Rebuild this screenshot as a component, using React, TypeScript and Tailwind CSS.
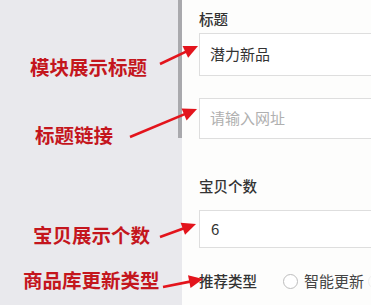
import React from "react";

const arrows: [number, number, number, number][] = [
  [160, 64, 198, 46],
  [130, 137, 197, 109],
  [160, 237, 196, 224],
  [163, 287, 203, 279],
];

function Arrow({ a }: { a: [number, number, number, number] }) {
  const [x1, y1, x2, y2] = a;
  const dx = x2 - x1;
  const dy = y2 - y1;
  const len = Math.hypot(dx, dy);
  const ux = dx / len;
  const uy = dy / len;
  const hl = 14;
  const hw = 6.5;
  const bx = x2 - ux * hl;
  const by = y2 - uy * hl;
  const p1 = `${x2},${y2}`;
  const p2 = `${bx - uy * hw},${by + ux * hw}`;
  const p3 = `${bx + uy * hw},${by - ux * hw}`;
  return (
    <g>
      <line x1={x1} y1={y1} x2={bx + ux * 2} y2={by + uy * 2} stroke="#e3141c" strokeWidth={2.6} />
      <polygon points={`${p1} ${p2} ${p3}`} fill="#e3141c" />
    </g>
  );
}

export default function App() {
  const cjk = { fontFamily: '"Noto Sans CJK SC", "Noto Sans", sans-serif' };
  return (
    <div className="relative w-[371px] h-[305px] overflow-hidden flex bg-white" style={cjk}>
      <div className="w-[182px] shrink-0 h-full bg-[#e9e9ed] flex">
        <div className="flex-1 flex flex-col text-[#c4161d] font-bold text-[19.5px] leading-[24px]">
          <div className="mt-[55px] ml-[30px] whitespace-nowrap">模块展示标题</div>
          <div className="mt-[44px] ml-[35px] whitespace-nowrap">标题链接</div>
          <div className="mt-[76px] ml-[33px] whitespace-nowrap">宝贝展示个数</div>
          <div className="mt-[21px] ml-[23px] whitespace-nowrap">商品库更新类型</div>
        </div>
        <div className="w-[4px] shrink-0 h-[138px] bg-[#a9a9ad]" />
      </div>
      <div className="flex-1 min-w-0 overflow-hidden bg-[#fdfdfc] pl-[17px] flex flex-col">
        <div className="mt-[9px] h-[20px] leading-[20px] text-[14.5px] font-medium text-[#333]">标题</div>
        <div className="mt-[4px] h-[43px] w-[200px] shrink-0 border border-[#dedede] border-r-0 bg-white flex items-center pl-[10px] text-[15px] text-[#333]">
          潜力新品
        </div>
        <div className="mt-[22px] h-[41px] w-[200px] shrink-0 border border-[#dedede] border-r-0 bg-white flex items-center pl-[10px] text-[15px] text-[#b0b0b0]">
          请输入网址
        </div>
        <div className="mt-[37px] h-[20px] leading-[20px] text-[14.5px] font-medium text-[#333]">宝贝个数</div>
        <div className="mt-[14px] h-[38px] w-[200px] shrink-0 border border-[#dedede] border-r-0 bg-white flex items-center pl-[11px] text-[15px] text-[#333]">
          6
        </div>
        <div className="mt-[23px] h-[20px] flex items-center whitespace-nowrap">
          <span className="text-[14.5px] font-medium text-[#333]">推荐类型</span>
          <span className="ml-[26px] shrink-0 w-[15px] h-[15px] rounded-full border border-[#bdbdbd] bg-white" />
          <span className="ml-[6px] text-[15px] text-[#444]">智能更新</span>
          <span className="ml-[4px] shrink-0 w-[15px] h-[15px] rounded-full border border-[#efefef]" />
        </div>
      </div>
      <svg className="absolute inset-0 pointer-events-none" width={371} height={305}>
        {arrows.map((a, i) => (
          <Arrow key={i} a={a} />
        ))}
      </svg>
    </div>
  );
}
